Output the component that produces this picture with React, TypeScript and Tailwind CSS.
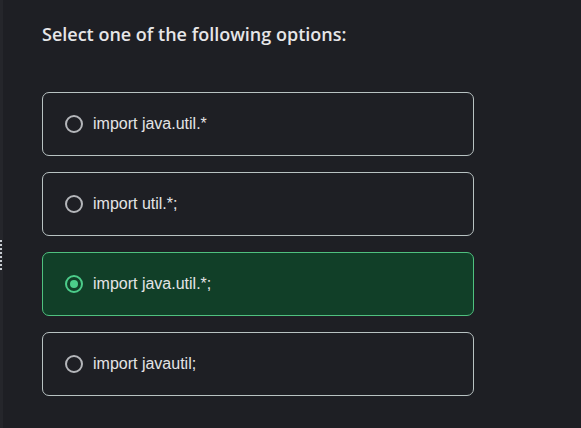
import { useState } from 'react';

const options = ['import java.util.*', 'import util.*;', 'import java.util.*;', 'import javautil;'];

export default function App() {
  const [selected, setSelected] = useState(2);

  return (
    <div className="relative h-[428px] w-[581px] overflow-hidden bg-[#1e1f24]">
      {/* left edge strip */}
      <div className="absolute left-0 top-0 flex h-full w-[3px] flex-col bg-[#25262b] pt-[240px]">
        {Array.from({ length: 8 }).map((_, i) => (
          <div key={i} className="mb-[2px] h-[2px] w-[2px] bg-[#c8ccd2]" />
        ))}
      </div>

      <div className="pl-[42px] pt-[22px]">
        <h2 className="text-[18px] font-semibold leading-[24px] text-[#e6e6e8] [font-family:'Open_Sans',sans-serif]">
          Select one of the following options:
        </h2>

        <div className="mt-[46px] flex w-[432px] flex-col gap-[16px]">
          {options.map((opt, i) => {
            const active = selected === i;
            return (
              <button
                key={i}
                onClick={() => setSelected(i)}
                className={`flex h-[64px] items-center gap-[10px] rounded-[7px] border pl-[22px] text-left ${
                  active ? 'border-[#4fc17f] bg-[#113f28]' : 'border-[#b8c2c2] bg-[#1e1f24]'
                }`}
              >
                <span
                  className={`flex h-[18px] w-[18px] items-center justify-center rounded-full border-2 ${
                    active ? 'border-[#4ccc8a]' : 'border-[#b4b6ba]'
                  }`}
                >
                  {active && <span className="h-[8px] w-[8px] rounded-full bg-[#4ccc8a]" />}
                </span>
                <span className="text-[16px] leading-[20px] text-[#e4e4e6] [font-family:'Liberation_Sans',Arial,sans-serif]">
                  {opt}
                </span>
              </button>
            );
          })}
        </div>
      </div>
    </div>
  );
}
